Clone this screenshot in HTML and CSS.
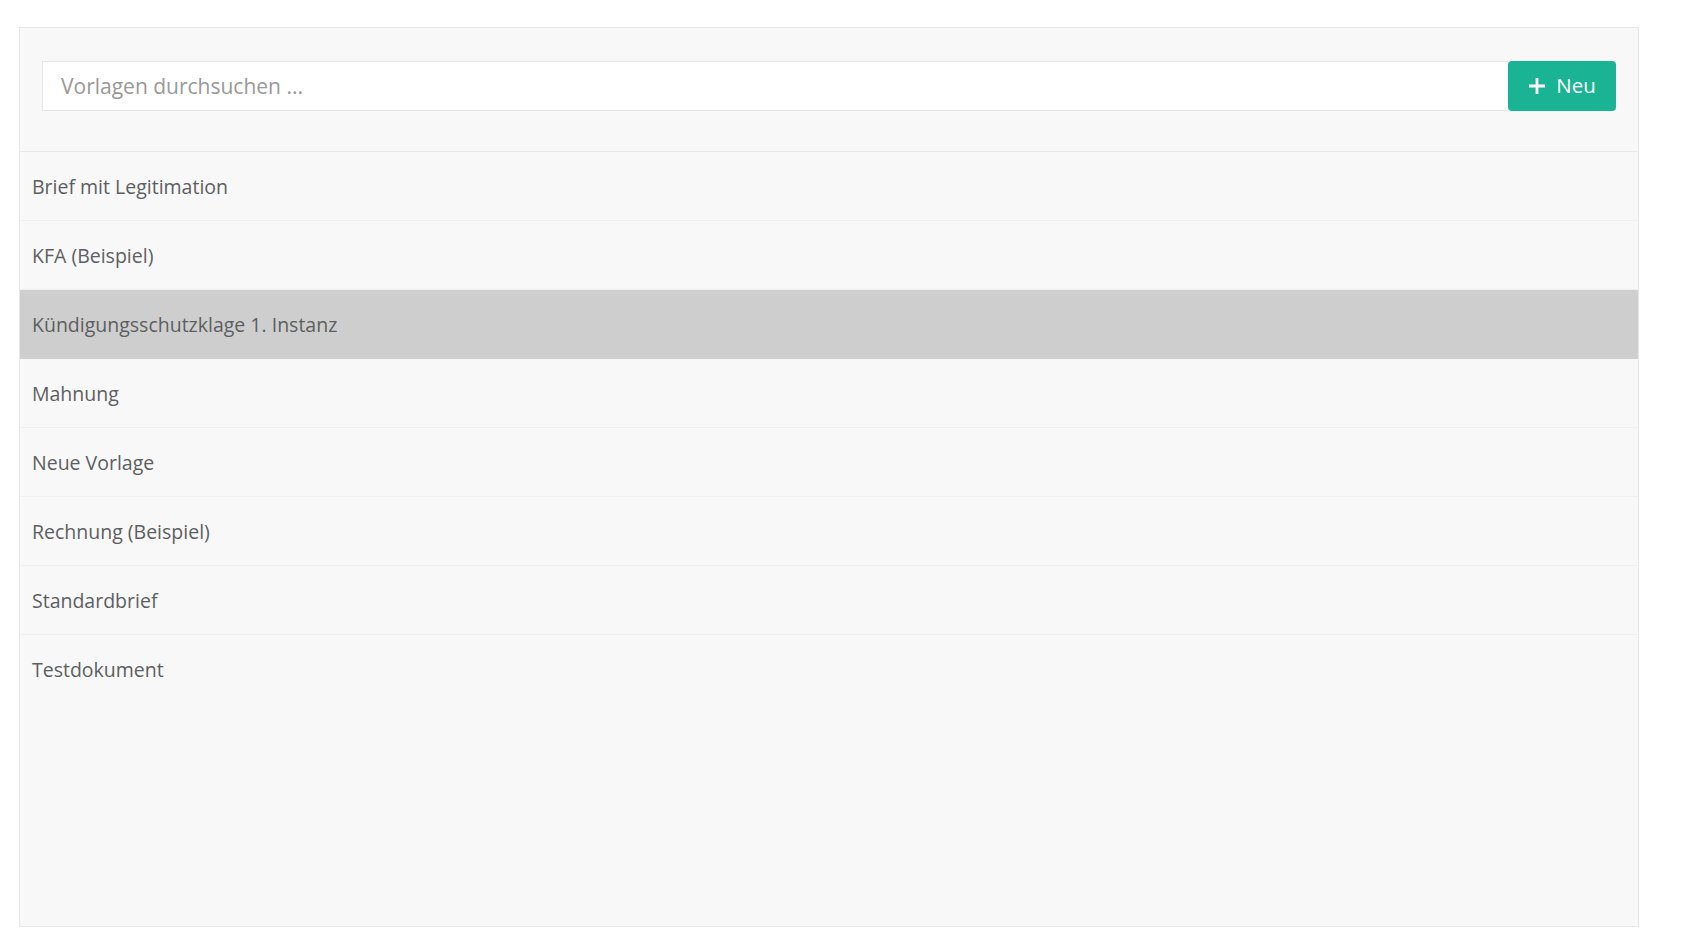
FILE: index.html
```html
<!DOCTYPE html>
<html lang="de">
<head>
<meta charset="utf-8">
<title>Vorlagen</title>
<link rel="stylesheet" href="styles.css">
</head>
<body>
<div class="panel">
  <div class="panel-header">
    <div class="search-group">
      <input class="search-input" type="text" placeholder="Vorlagen durchsuchen ...">
      <button class="btn-new" type="button">
        <svg class="plus" width="18" height="18" viewBox="0 0 18 18"><path d="M9 1v16M1 9h16" stroke="#fff" stroke-width="2.8" fill="none"/></svg>
        <span>Neu</span>
      </button>
    </div>
  </div>
  <ul class="list">
    <li class="item">Brief mit Legitimation</li>
    <li class="item">KFA (Beispiel)</li>
    <li class="item active">Kündigungsschutzklage 1. Instanz</li>
    <li class="item">Mahnung</li>
    <li class="item">Neue Vorlage</li>
    <li class="item">Rechnung (Beispiel)</li>
    <li class="item">Standardbrief</li>
    <li class="item last">Testdokument</li>
  </ul>
</div>
</body>
</html>
```
FILE: styles.css
```css
* { box-sizing: border-box; }
html, body { margin: 0; padding: 0; background: #ffffff; }
body {
  font-family: "Open Sans", "Noto Sans", sans-serif;
  color: #676a6c;
  padding: 27px 51px 24px 19px;
}
.panel {
  width: 1620px;
  height: 900px;
  background: #f8f8f8;
  border: 1px solid #e7e7e7;
  display: flex;
  flex-direction: column;
}
.panel-header {
  padding: 33px 22px 40px 22px;
  border-bottom: 1px solid #e4e9ef;
}
.search-group {
  display: flex;
  height: 50px;
}
.search-input {
  flex: 1;
  height: 50px;
  border: 1px solid #e5e6e7;
  border-right: none;
  background: #fff;
  font-family: inherit;
  font-size: 21px;
  color: #676a6c;
  padding: 0 18px;
  outline: none;
}
.search-input::placeholder { color: #999999; }
.btn-new {
  width: 108px;
  height: 50px;
  background: #1ab394;
  border: none;
  border-radius: 4px;
  color: #fff;
  font-family: inherit;
  font-size: 20.5px;
  display: flex;
  align-items: center;
  justify-content: center;
  gap: 10px;
  padding: 0 0 2px 0;
  cursor: pointer;
}
.plus { display: block; margin-top: 2px; }
.list {
  list-style: none;
  margin: 0;
  padding: 0;
}
.item {
  height: 69px;
  display: flex;
  align-items: center;
  padding: 0 12px;
  font-size: 19.5px;
  border-bottom: 1px solid #efefef;
  color: #5c5f62;
}
.item.active {
  background: #cecece;
  border-bottom-color: #cecece;
}
.item.last { border-bottom: none; }
```
